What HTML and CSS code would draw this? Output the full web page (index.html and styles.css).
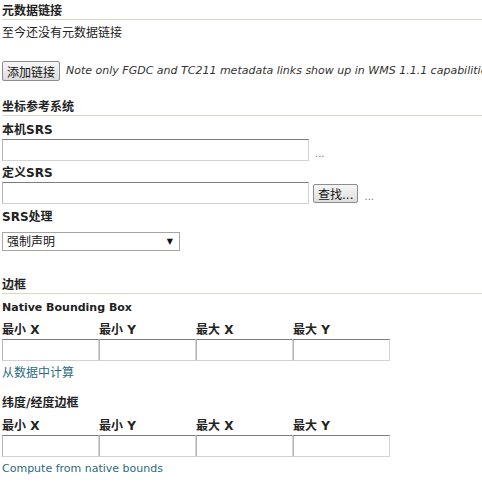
FILE: index.html
```html
<!DOCTYPE html>
<html lang="zh-CN">
<head>
  <meta charset="UTF-8">
  <title>编辑图层</title>
  <link rel="stylesheet" href="styles.css">
</head>
<body>
  <div class="page">
    <h3 class="section-title first">元数据链接</h3>
    <p class="empty-note">至今还没有元数据链接</p>
    <div class="button-row">
      <button class="btn">添加链接</button>
      <span class="hint latin">Note only FGDC and TC211 metadata links show up in WMS 1.1.1 capabilities</span>
    </div>

    <h3 class="section-title srs-title">坐标参考系统</h3>
    <label class="field-label native-label">本机SRS</label>
    <div class="field-row">
      <input type="text" class="text-input srs-input">
      <span class="more">...</span>
    </div>
    <label class="field-label declared-label">定义SRS</label>
    <div class="field-row">
      <input type="text" class="text-input srs-input">
      <button class="btn find-btn">查找...</button>
      <span class="more">...</span>
    </div>
    <label class="field-label policy-label">SRS处理</label>
    <div class="select-box">
      <span>强制声明</span>
      <span class="arrow">&#9660;</span>
    </div>

    <h3 class="section-title bbox-title">边框</h3>
    <div class="sub-title native-bbox latin">Native Bounding Box</div>
    <div class="bbox-grid">
      <label>最小 X</label>
      <label>最小 Y</label>
      <label>最大 X</label>
      <label>最大 Y</label>
      <input type="text" class="text-input">
      <input type="text" class="text-input">
      <input type="text" class="text-input">
      <input type="text" class="text-input">
    </div>
    <a href="#" class="action-link">从数据中计算</a>

    <div class="sub-title latlon-bbox">纬度/经度边框</div>
    <div class="bbox-grid">
      <label>最小 X</label>
      <label>最小 Y</label>
      <label>最大 X</label>
      <label>最大 Y</label>
      <input type="text" class="text-input">
      <input type="text" class="text-input">
      <input type="text" class="text-input">
      <input type="text" class="text-input">
    </div>
    <a href="#" class="action-link latin">Compute from native bounds</a>
  </div>
</body>
</html>
```

FILE: styles.css
```css
html, body {
  margin: 0;
  padding: 0;
  overflow: hidden;
}
body {
  font-family: "DejaVu Sans", Verdana, "Noto Sans CJK SC", sans-serif;
  font-size: 12px;
  line-height: 16px;
  color: #222;
  background-color: #fff;
}
.page {
  padding: 0 0 0 2px;
}
.latin {
  font-size: 11px;
}
.section-title {
  margin: 0;
  font-size: 12px;
  font-weight: bold;
  line-height: 16px;
  border-bottom: 1px solid #dbd8c1;
}
.section-title.first {
  margin-top: 3px;
}
.srs-title {
  margin-top: 18px;
}
.bbox-title {
  margin-top: 26px;
}
.empty-note {
  margin: 5px 0 0;
}
.button-row {
  display: flex;
  align-items: center;
  margin-top: 20px;
  white-space: nowrap;
  overflow: hidden;
}
.btn {
  font-family: "DejaVu Sans", "Noto Sans CJK SC", sans-serif;
  font-size: 12px;
  height: 20px;
  padding: 0 4px;
  color: #111;
  background: linear-gradient(#f6f6f6, #dedede);
  border: 1px solid #8d8d8d;
  border-radius: 2px;
}
.hint {
  margin-left: 6px;
  font-style: italic;
  color: #333;
}
.field-label {
  display: block;
  font-weight: bold;
}
.native-label {
  margin-top: 6px;
}
.declared-label {
  margin-top: 4px;
}
.policy-label {
  margin-top: 5px;
}
.field-row {
  display: flex;
  align-items: center;
  margin-top: 1px;
}
.text-input {
  box-sizing: border-box;
  height: 22px;
  margin: 0;
  padding: 0 3px;
  border: 1px solid;
  border-color: #7c7c7c #d2d2d2 #d2d2d2 #b4b4b4;
  background: #fff;
}
.srs-input {
  width: 307px;
}
.find-btn {
  height: 19px;
  margin-left: 4px;
}
.more {
  margin-left: 6px;
  color: #777;
  font-size: 10px;
  align-self: flex-end;
  line-height: 14px;
}
.select-box {
  box-sizing: border-box;
  display: flex;
  justify-content: space-between;
  align-items: center;
  width: 178px;
  height: 19px;
  margin-top: 7px;
  padding: 0 6px 0 4px;
  border: 1px solid #a6a6a6;
  color: #111;
}
.arrow {
  font-size: 8px;
}
.sub-title {
  font-weight: bold;
}
.native-bbox {
  margin-top: 6px;
}
.latlon-bbox {
  margin-top: 14px;
}
.bbox-grid {
  display: grid;
  grid-template-columns: repeat(4, 97px);
  row-gap: 1px;
  margin-top: 6px;
}
.bbox-grid label {
  font-weight: bold;
}
.bbox-grid .text-input {
  width: 97px;
}
.latlon-bbox + .bbox-grid {
  margin-top: 7px;
}
.action-link {
  display: block;
  margin-top: 4px;
  color: #2b6b7e;
  text-decoration: none;
}
```
